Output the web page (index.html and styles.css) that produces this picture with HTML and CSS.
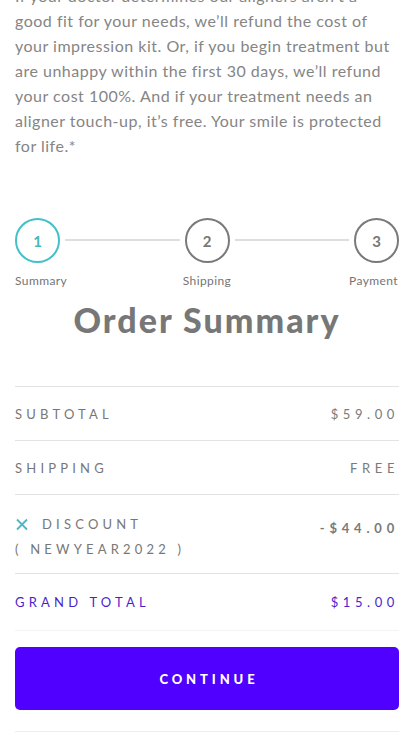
FILE: index.html
```html
<!DOCTYPE html>
<html lang="en">
<head>
<meta charset="utf-8">
<title>Order Summary</title>
<link rel="stylesheet" href="styles.css">
</head>
<body>
<main class="page">
  <p class="intro">If your doctor determines our aligners aren’t a good fit for your needs, we’ll refund the cost of your impression kit. Or, if you begin treatment but are unhappy within the first 30 days, we’ll refund your cost 100%. And if your treatment needs an aligner touch-up, it’s free. Your smile is protected for life.*</p>

  <div class="steps">
    <div class="step step-first step-active">
      <div class="circle">1</div>
      <div class="step-label">Summary</div>
    </div>
    <div class="step-line"></div>
    <div class="step">
      <div class="circle">2</div>
      <div class="step-label">Shipping</div>
    </div>
    <div class="step-line"></div>
    <div class="step step-last">
      <div class="circle">3</div>
      <div class="step-label">Payment</div>
    </div>
  </div>

  <h1 class="title">Order Summary</h1>

  <div class="summary">
    <div class="row">
      <span class="label">SUBTOTAL</span>
      <span class="value">$59.00</span>
    </div>
    <div class="row">
      <span class="label">SHIPPING</span>
      <span class="value">FREE</span>
    </div>
    <div class="row row-discount">
      <div class="discount-left">
        <span class="label"><svg class="remove" width="14" height="13" viewBox="0 0 14 13"><path d="M2 1.5 L12 11.5 M12 1.5 L2 11.5" stroke="#4fb7c4" stroke-width="1.8" fill="none"/></svg>DISCOUNT</span>
        <span class="label code">( NEWYEAR2022 )</span>
      </div>
      <span class="value value-bold">-$44.00</span>
    </div>
    <div class="row row-total">
      <span class="label">GRAND TOTAL</span>
      <span class="value">$15.00</span>
    </div>
  </div>

  <button class="continue" type="button">CONTINUE</button>
  <div class="bottom-rule"></div>
</main>
</body>
</html>
```

FILE: styles.css
```css
html, body {
  margin: 0;
  padding: 0;
  background: #ffffff;
  overflow: hidden;
}

body {
  font-family: Lato, "Liberation Sans", sans-serif;
  color: #7b7b7b;
}

.page {
  padding: 0 15px;
}

.intro {
  margin: -17px 0 0;
  font-size: 16px;
  line-height: 25px;
  letter-spacing: 0.5px;
  color: #858585;
}

.steps {
  display: flex;
  align-items: flex-start;
  margin-top: 60px;
}

.step {
  display: flex;
  flex-direction: column;
  align-items: center;
  width: 45px;
}

.step-first {
  align-items: flex-start;
}

.step-last {
  align-items: flex-end;
}

.circle {
  width: 45px;
  height: 45px;
  box-sizing: border-box;
  border: 2px solid #7a7a7a;
  border-radius: 50%;
  display: flex;
  align-items: center;
  justify-content: center;
  font-size: 15px;
  font-weight: 700;
  color: #777777;
}

.step-active .circle {
  border-color: #45c0c8;
  color: #45b8c0;
}

.step-label {
  margin-top: 11px;
  font-size: 12px;
  line-height: 14px;
  color: #747474;
  white-space: nowrap;
  letter-spacing: 0.4px;
}

.step-last .step-label {
  margin-right: 1px;
}

.step-line {
  flex: 1;
  height: 2px;
  background: #dedede;
  margin: 21px 5px 0;
}

.title {
  margin: 12px 0 0;
  text-align: center;
  font-size: 34px;
  line-height: 40px;
  font-weight: 900;
  color: #777777;
  letter-spacing: 2px;
}

.summary {
  margin-top: 46px;
}

.row {
  display: flex;
  justify-content: space-between;
  align-items: center;
  height: 54px;
  border-top: 1px solid #e3e3e3;
  box-sizing: border-box;
}

.label {
  font-size: 13px;
  letter-spacing: 4.2px;
  color: #777777;
  display: flex;
  align-items: center;
  white-space: pre;
}

.value {
  font-size: 13px;
  letter-spacing: 4.6px;
  color: #7a7a7a;
}

.value-bold {
  font-weight: 700;
  letter-spacing: 4.8px;
}

.row-discount {
  height: 79px;
  align-items: flex-start;
  padding-top: 21px;
}

.discount-left {
  display: flex;
  flex-direction: column;
  gap: 9px;
}

.remove {
  margin-right: 13px;
}

.row-discount .value {
  padding-top: 4px;
}

.row-total {
  height: 58px;
  border-bottom: 1px solid #f3f3f3;
}

.row-total .label,
.row-total .value {
  color: #4b1fcc;
}

.continue {
  display: block;
  width: 100%;
  height: 63px;
  margin-top: 16px;
  border: none;
  border-radius: 5px;
  background: #5000ff;
  color: #ffffff;
  font-family: Lato, "Liberation Sans", sans-serif;
  font-size: 13px;
  font-weight: 900;
  letter-spacing: 3.9px;
  padding: 0 0 0 4px;
}

.bottom-rule {
  margin-top: 21px;
  height: 1px;
  background: #eeeeee;
}
```
